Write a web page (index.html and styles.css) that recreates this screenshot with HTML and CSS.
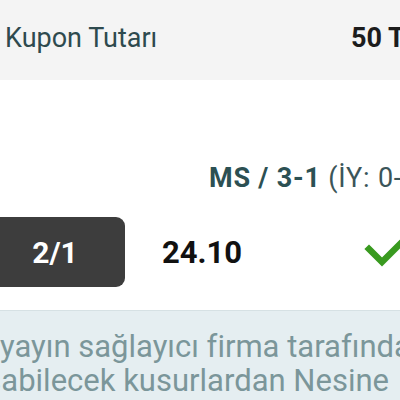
FILE: index.html
```html
<!DOCTYPE html>
<html lang="tr">
<head>
  <meta charset="UTF-8">
  <meta name="viewport" content="width=device-width, initial-scale=1.0">
  <title>Kupon Detayı</title>
  <link rel="stylesheet" href="styles.css">
</head>
<body>

<div class="page">
  <div class="summary">
    <span class="label">Kupon Tutarı</span>
    <span class="amount">50 TL</span>
  </div>

  <div class="pick">
    <div class="market"><b>MS / 3-1</b> (İY: 0-1)</div>
    <div class="row">
      <div class="tag">2/1</div>
      <div class="odd">24.10</div>
      <svg class="check" width="44" height="30" viewBox="0 0 44 30">
        <polyline points="3,10 16,23 41,-2" fill="none" stroke="#399a1f" stroke-width="6.5" stroke-linecap="square"/>
      </svg>
    </div>
  </div>

  <div class="note">
    <p class="line">yayın sağlayıcı firma tarafından</p>
    <p class="line shift">oluşabilecek kusurlardan Nesine</p>
  </div>
</div>

</body>
</html>
```

FILE: styles.css
```css
html, body {
  margin: 0;
  padding: 0;
  background: #fff;
  overflow: hidden;
}

body {
  width: 400px;
  height: 400px;
  font-family: Roboto, "Liberation Sans", sans-serif;
}

.page {
  width: 440px;
}

.summary {
  height: 80px;
  box-sizing: border-box;
  padding: 0 0 5px 5px;
  background: #f4f4f4;
  display: flex;
  align-items: center;
  white-space: nowrap;
}

.label {
  font-size: 27px;
  color: #2e4a4e;
  width: 346px;
}

.amount {
  font-size: 27px;
  font-weight: bold;
  color: #1c1c1c;
}

.pick {
  padding: 84px 0 23px 0;
}

.market {
  padding-left: 209px;
  font-size: 27px;
  line-height: 28px;
  letter-spacing: 0.8px;
  color: #3b5559;
  white-space: nowrap;
}

.market b {
  color: #2c5053;
}

.row {
  margin-top: 25px;
  display: flex;
  align-items: center;
  height: 70px;
}

.tag {
  width: 140px;
  height: 70px;
  margin-left: -15px;
  background: #3d3d3d;
  border-radius: 9px;
  color: #fff;
  font-size: 30px;
  font-weight: bold;
  display: flex;
  align-items: center;
  justify-content: center;
}

.odd {
  margin-left: 37px;
  width: 204px;
  font-size: 31px;
  font-weight: bold;
  color: #111;
}

.check {
  margin-top: 4px;
  overflow: visible;
}

.note {
  background: #e5eef1;
  border-top: 1px solid #d6e1e4;
  padding-top: 19px;
  height: 90px;
}

.line {
  margin: 0;
  font-size: 31px;
  line-height: 34px;
  color: #7b969a;
  white-space: nowrap;
}

.shift {
  margin-left: -57px;
}
```
